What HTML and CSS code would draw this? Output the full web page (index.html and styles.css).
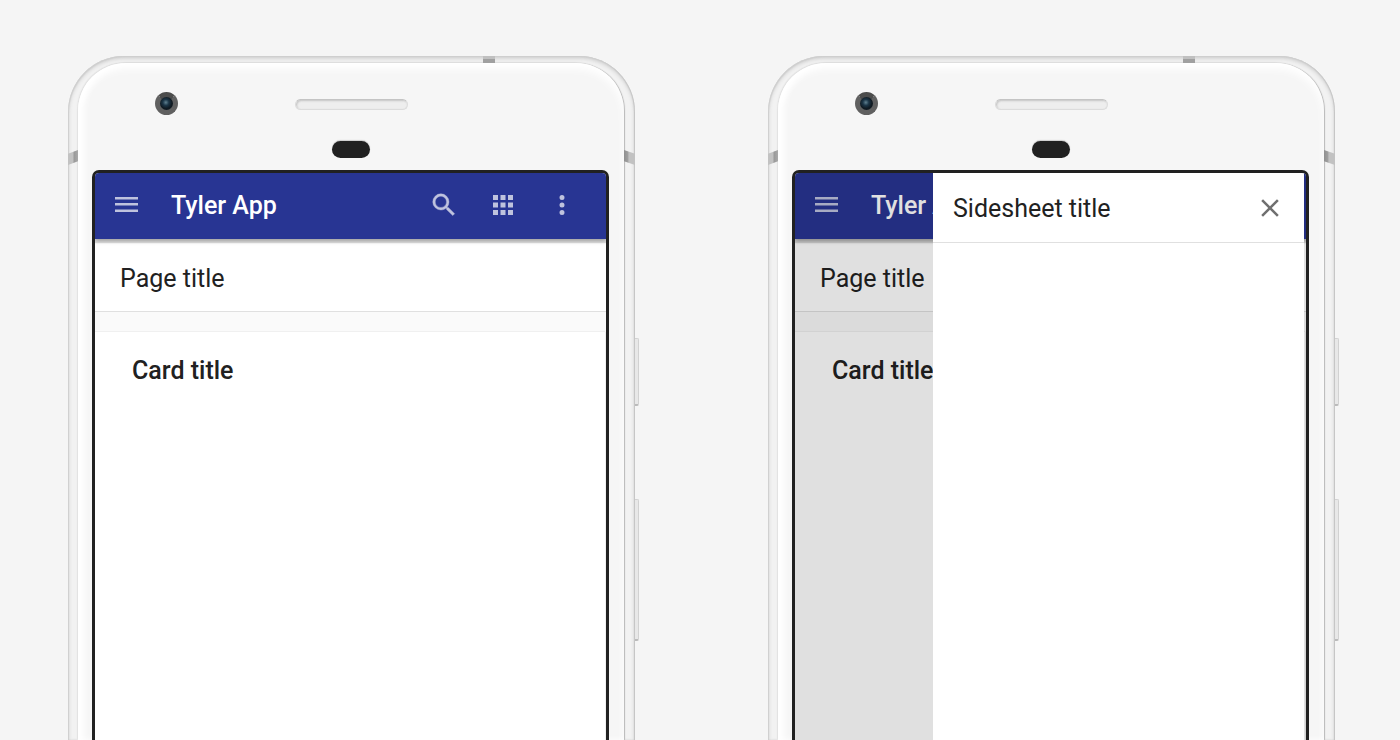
FILE: index.html
```
<!DOCTYPE html>
<html lang="en">
<head>
<meta charset="utf-8">
<title>Tyler App</title>
<link rel="stylesheet" href="styles.css">
</head>
<body>
<main class="stage">
  <section class="phone">
    <div class="face">
      <span class="camera"></span>
      <span class="speaker"></span>
      <span class="sensor"></span>
      <div class="screen">
        <header class="app-bar">
          <button class="icon-button" type="button" aria-label="Menu"><svg viewBox="0 0 30 30"><path d="M4 7h23v2.500H4zM4 13h23v2.500H4zM4 19.500h23v2.500H4z"/></svg></button>
          <h1 class="app-name">Tyler App</h1>
          <button class="icon-button" type="button" aria-label="Search"><svg class="bold" viewBox="0 0 24 24"><path d="M15.500 14h-.79l-.28-.27A6.470 6.470 0 0 0 16 9.500 6.500 6.500 0 1 0 9.500 16c1.610 0 3.090-.59 4.230-1.570l.27.28v.79l5 4.990L20.490 19l-4.990-5zm-6 0C7.010 14 5 11.990 5 9.500S7.010 5 9.500 5 14 7.010 14 9.500 11.990 14 9.500 14z"/></svg></button>
          <button class="icon-button" type="button" aria-label="Apps"><svg viewBox="0 0 24 24"><path d="M4 8h4V4H4v4zm6 12h4v-4h-4v4zm-6 0h4v-4H4v4zm0-6h4v-4H4v4zm6 0h4v-4h-4v4zm6-10v4h4V4h-4zm-6 4h4V4h-4v4zm6 6h4v-4h-4v4zm0 6h4v-4h-4v4z"/></svg></button>
          <button class="icon-button" type="button" aria-label="More options"><svg viewBox="0 0 24 24"><path d="M12 8a2 2 0 1 0 0-4 2 2 0 0 0 0 4zm0 2a2 2 0 1 0 0 4 2 2 0 0 0 0-4zm0 6a2 2 0 1 0 0 4 2 2 0 0 0 0-4z"/></svg></button>
        </header>
        <div class="page-header"><h2 class="page-title">Page title</h2></div>
        <article class="card"><h3 class="card-title">Card title</h3></article>
      </div>
    </div>
    <span class="antenna antenna-top"></span>
    <span class="antenna antenna-left"></span>
    <span class="antenna antenna-right"></span>
    <span class="side-button power"></span>
    <span class="side-button volume"></span>
  </section>

  <section class="phone">
    <div class="face">
      <span class="camera"></span>
      <span class="speaker"></span>
      <span class="sensor"></span>
      <div class="screen">
        <header class="app-bar">
          <button class="icon-button" type="button" aria-label="Menu"><svg viewBox="0 0 30 30"><path d="M4 7h23v2.500H4zM4 13h23v2.500H4zM4 19.500h23v2.500H4z"/></svg></button>
          <h1 class="app-name">Tyler App</h1>
        </header>
        <div class="page-header"><h2 class="page-title">Page title</h2></div>
        <article class="card"><h3 class="card-title">Card title</h3></article>
        <div class="scrim"></div>
        <aside class="sidesheet">
          <header class="sheet-header">
            <h2 class="page-title">Sidesheet title</h2>
            <button class="icon-button close" type="button" aria-label="Close"><svg viewBox="0 0 24 24"><path d="M19 6.410 17.590 5 12 10.590 6.410 5 5 6.410 10.590 12 5 17.590 6.410 19 12 13.410 17.590 19 19 17.590 13.410 12z"/></svg></button>
          </header>
        </aside>
      </div>
    </div>
    <span class="antenna antenna-top"></span>
    <span class="antenna antenna-left"></span>
    <span class="antenna antenna-right"></span>
    <span class="side-button power"></span>
    <span class="side-button volume"></span>
  </section>
</main>
</body>
</html>
```
FILE: styles.css
```
* { box-sizing: border-box; }

body {
  margin: 0;
  background: #f5f5f5;
  color: #212121;
  font-family: Roboto, "Liberation Sans", sans-serif;
}

h1, h2, h3 {
  margin: 0;
  padding: 2px 0 0 1px;
  font-size: 25px;
  line-height: 32px;
}

.stage {
  display: grid;
  grid-template-columns: 1fr 1fr;
  height: 100vh;
  overflow: hidden;
}

/* Device */
.phone {
  position: relative;
  display: flex;
  margin: 56px 65px 0 68px;
  padding: 7px 11px 0 10px;
  border-radius: 56px 56px 0 0;
  background: #f2f2f2;
  box-shadow: inset 1px 1px 1px #cfcfcf, inset -1px 0 1px #c4c4c4, inset 0 2px 4px #c8c8c8;
}

.face {
  position: relative;
  flex: 1;
  display: flex;
  padding: 107px 15px 0 14px;
  border-radius: 48px 48px 0 0;
  background: #f6f6f6;
  box-shadow: inset 0 6px 8px #fff, inset 6px 0 6px #fff, 1px 0 1px #b8b8b8, -1px -1px 1px #e2e2e2;
}

.antenna { position: absolute; }
.antenna-top {
  top: 0;
  right: 140px;
  width: 12px;
  height: 7px;
  background: linear-gradient(#c0c0c0 40%, #a0a0a0 50%);
}
.antenna-left, .antenna-right { top: 94px; height: 15px; }
.antenna-left {
  left: 0;
  width: 10px;
  background: linear-gradient(90deg, #c2c2c2 50%, #999 60%, #aaa);
  clip-path: polygon(0 25%, 100% 0, 100% 75%, 0 100%);
}
.antenna-right {
  right: 0;
  width: 11px;
  background: linear-gradient(90deg, #909090, #a0a0a0 35%, #c2c2c2 45%);
  clip-path: polygon(0 0, 100% 25%, 100% 100%, 0 75%);
}

.side-button {
  position: absolute;
  left: 100%;
  width: 4px;
  border: 1px solid #d2d2d2;
  border-bottom: 2px solid #bbb;
  border-left: 0;
  border-radius: 0 2px 2px 0;
  background: #e8e8e8;
}
.power { top: 282px; height: 68px; }
.volume { top: 443px; height: 142px; }

.camera {
  position: absolute;
  top: 29px;
  left: 77px;
  width: 23px;
  height: 23px;
  border: 5px solid #606060;
  border-top-color: #4c4c4c;
  border-radius: 50%;
  background: radial-gradient(circle at 45% 42%, #60808f 0, #1c3648 3px, #101a22 6px);
}
.speaker {
  position: absolute;
  top: 36px;
  left: 50%;
  width: 113px;
  height: 11px;
  margin-left: -56px;
  border: 1px solid #dcdcdc;
  border-top-color: #c4c4c4;
  border-radius: 6px;
  background: #eee;
  box-shadow: inset 1px 1px 2px #c4c4c4;
}
.sensor {
  position: absolute;
  top: 78px;
  left: 50%;
  width: 38px;
  height: 17px;
  margin-left: -19px;
  border-radius: 9px;
  background: #212121;
  box-shadow: 0 -1px 1px #ccc;
}

/* App */
.screen {
  position: relative;
  flex: 1;
  display: flex;
  flex-direction: column;
  overflow: hidden;
  border: 3px solid #212121;
  border-bottom: 0;
  border-radius: 7px 7px 0 0;
  background: #fafafa;
}

.app-bar {
  position: relative;
  display: flex;
  align-items: center;
  gap: 29px;
  height: 66px;
  padding: 0 29px 2px 16px;
  background: #283593;
  color: #fff;
  box-shadow: 0 2px 4px rgba(0, 0, 0, .3), 0 4px 1px rgba(0, 0, 0, .12);
}
.app-name { flex: 1; font-weight: 500; white-space: nowrap; }

.icon-button {
  display: flex;
  flex: none;
  width: 30px;
  height: 30px;
  padding: 0;
  border: 0;
  background: none;
  color: inherit;
  cursor: pointer;
}
.icon-button svg { width: 30px; height: 30px; fill: currentColor; opacity: .7; }
.icon-button .bold { stroke: currentColor; stroke-width: .3; }

.page-header {
  height: 73px;
  padding: 22px 24px 0;
  border-bottom: 1px solid #e0e0e0;
  background: #fff;
}
.page-title { font-weight: 400; white-space: nowrap; }

.card {
  flex: 1;
  margin: 20px 1px 0 0;
  padding: 21px 36px;
  background: #fff;
  box-shadow: 0 0 1px #bbb;
}
.card-title { font-weight: 500; white-space: nowrap; }

.scrim { position: absolute; inset: 0; background: rgba(0, 0, 0, .12); }

.sidesheet {
  position: absolute;
  top: 0;
  right: 2px;
  bottom: 0;
  width: 371px;
  background: #fff;
}
.sheet-header {
  display: flex;
  align-items: center;
  justify-content: space-between;
  height: 70px;
  padding: 0 19px;
  border-bottom: 1px solid #e0e0e0;
}
.close { color: #333; }
```
